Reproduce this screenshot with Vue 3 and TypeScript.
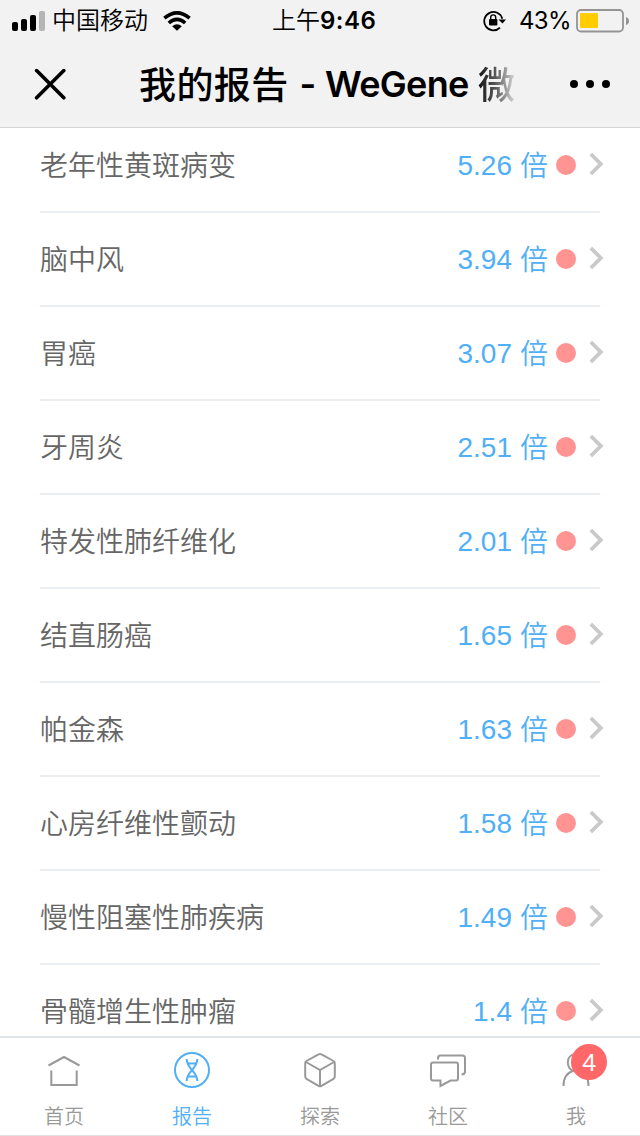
<script setup lang="ts">
interface Report {
  name: string
  risk: string
}

interface Tab {
  id: string
  label: string
  active?: boolean
  badge?: number
}

const reports: Report[] = [
  { name: '老年性黄斑病变', risk: '5.26' },
  { name: '脑中风', risk: '3.94' },
  { name: '胃癌', risk: '3.07' },
  { name: '牙周炎', risk: '2.51' },
  { name: '特发性肺纤维化', risk: '2.01' },
  { name: '结直肠癌', risk: '1.65' },
  { name: '帕金森', risk: '1.63' },
  { name: '心房纤维性颤动', risk: '1.58' },
  { name: '慢性阻塞性肺疾病', risk: '1.49' },
  { name: '骨髓增生性肿瘤', risk: '1.4' },
]

const tabs: Tab[] = [
  { id: 'home', label: '首页' },
  { id: 'report', label: '报告', active: true },
  { id: 'explore', label: '探索' },
  { id: 'community', label: '社区' },
  { id: 'me', label: '我', badge: 4 },
]
</script>

<template>
  <div class="screen">
    <header class="header">
      <div class="status">
        <div class="status-left">
          <svg class="signal" width="34" height="20" viewBox="0 0 34 20">
            <rect x="0" y="11" width="6" height="9" rx="2" />
            <rect x="9" y="8" width="6" height="12" rx="2" />
            <rect x="18" y="4" width="6" height="16" rx="2" />
            <rect x="27" y="0" width="6" height="20" rx="2" fill="#b5b5b5" />
          </svg>
          <span class="carrier">中国移动</span>
          <svg class="wifi" width="28" height="20" viewBox="0 0 28 20">
            <g fill="none" stroke="#000" stroke-width="3.6">
              <path d="M1.4 7.2 Q14 -3.4 26.6 7.2" />
              <path d="M5.8 12 Q14 4.8 22.2 12" />
            </g>
            <path d="M14 19.8 L9.2 15.2 Q14 11.2 18.8 15.2 Z" />
          </svg>
        </div>
        <div class="clock"><span>上午</span><span class="clock-time">9:46</span></div>
        <div class="status-right">
          <svg class="rotation" width="24" height="22" viewBox="0 0 24 22">
            <path d="M17 17.6 A9.2 9.2 0 1 1 19.3 8.7" fill="none" stroke="#000" stroke-width="1.8" />
            <path d="M15.4 9.4 H23 L19.5 13.6 Z" />
            <rect x="6" y="9" width="8.4" height="6.6" rx="1" />
            <path d="M7.7 10 V7.4 A2.5 2.5 0 0 1 12.7 7.4 V10" fill="none" stroke="#000" stroke-width="1.4" />
          </svg>
          <span class="percent">43%</span>
          <svg class="battery" width="54" height="24" viewBox="0 0 54 24">
            <rect x="1" y="1" width="46" height="21.5" rx="4" fill="none" stroke="#949494" stroke-width="1.8" />
            <rect x="4" y="4" width="18" height="15" rx="1" fill="#fc0" />
            <path d="M50 8 Q53 9 53 12 Q53 15 50 16 Z" fill="#949494" />
          </svg>
        </div>
      </div>
      <div class="nav">
        <svg class="close" width="32" height="32" viewBox="0 0 32 32">
          <path d="M2.6 2.6 L29.8 29.8 M29.8 2.6 L2.6 29.8" stroke="#000" stroke-width="3.6" stroke-linecap="round" />
        </svg>
        <h1 class="title"><span class="title-cn">我的报告</span><span class="title-dash">-</span><span class="title-en">WeGene</span><span class="title-fade">微</span></h1>
        <svg class="more" width="42" height="10" viewBox="0 0 42 10">
          <circle cx="5" cy="5" r="4" />
          <circle cx="21" cy="5" r="4" />
          <circle cx="37" cy="5" r="4" />
        </svg>
      </div>
    </header>

    <main class="content">
      <ul class="list">
        <li v-for="item in reports" :key="item.name" class="row">
          <span class="name">{{ item.name }}</span>
          <span class="risk"><span class="value">{{ item.risk }}</span><span class="unit">倍</span></span>
          <span class="dot"></span>
          <svg class="chevron" width="15" height="24" viewBox="0 0 15 24">
            <path d="M1.8 2 L11.8 12 L1.8 22" fill="none" stroke="#c9c9c9" stroke-width="3.8" />
          </svg>
        </li>
      </ul>
    </main>

    <nav class="tabs">
      <div v-for="tab in tabs" :key="tab.id" class="tab" :class="{ active: tab.active }">
        <svg class="tab-icon" width="40" height="40" viewBox="0 0 40 40" fill="none" stroke="currentColor" stroke-width="2">
          <template v-if="tab.id === 'home'">
            <path d="M4.5 15.5 L20 7 L35.5 15.5" />
            <path d="M7.3 20.5 V35 H32.7 V20.5" />
          </template>
          <template v-else-if="tab.id === 'report'">
            <circle cx="20" cy="20" r="17" />
            <path d="M14.7 9 C14.7 19 25.3 21 25.3 31 M25.3 9 C25.3 19 14.7 21 14.7 31" />
            <path d="M15.5 13.5 H24.5 M15.5 26.5 H24.5" />
          </template>
          <template v-else-if="tab.id === 'explore'">
            <path d="M18.5 4.3 L6.5 11 Q5.2 11.8 5.2 13.3 V26.5 Q5.2 28 6.5 28.8 L18.5 35.8 Q20 36.7 21.5 35.8 L33.5 28.8 Q34.8 28 34.8 26.5 V13.3 Q34.8 11.8 33.5 11 L21.5 4.3 Q20 3.5 18.5 4.3 Z" />
            <path d="M6 12 L20 20 L34 12 M20 20 V36" />
          </template>
          <template v-else-if="tab.id === 'community'">
            <path d="M10 9.5 V8 Q10 5.5 12.5 5.5 H34.5 Q37 5.5 37 8 V21.5 Q37 24.5 33.5 24.5" />
            <path d="M5 12.5 H28 Q30 12.5 30 14.5 V28.5 Q30 30.5 28 30.5 H22.5 L12.5 36 V30.5 H5 Q3 30.5 3 28.5 V14.5 Q3 12.5 5 12.5 Z" />
          </template>
          <template v-else>
            <path d="M17 21 C13.5 19 11.8 16 11.8 12.5 C11.8 7.5 15 4 20 4 C25 4 28.2 7.5 28.2 12.5 C28.2 16 26.5 19 23 21" />
            <path d="M7.5 36 C7.5 27 11 22.5 18 20.5 M22 20.5 C29 22.5 32.5 27 32.5 36" />
          </template>
        </svg>
        <span class="tab-label">{{ tab.label }}</span>
        <span v-if="tab.badge" class="badge">{{ tab.badge }}</span>
      </div>
    </nav>
  </div>
</template>

<style>
body {
  margin: 0;
  background: #fff;
}
</style>

<style scoped>
.screen {
  display: flex;
  flex-direction: column;
  width: 640px;
  height: 1136px;
  overflow: hidden;
  background: #fff;
  font-family: "Liberation Sans", "Noto Sans CJK SC", sans-serif;
}

.header {
  flex: none;
  box-sizing: border-box;
  height: 128px;
  background: #f2f2f2;
  border-bottom: 1px solid #d5d5d5;
  color: #000;
}

.status {
  display: grid;
  grid-template-columns: 272px 151px 1fr;
  align-items: center;
  height: 40px;
  font-family: Inter, "Noto Sans CJK SC", sans-serif;
  font-size: 24px;
  line-height: 40px;
  white-space: nowrap;
}

.status-left,
.status-right,
.clock {
  display: flex;
  align-items: center;
}

.status-left {
  padding-left: 12px;
}

.carrier,
.clock {
  padding-top: 1px;
  font-weight: 350;
}

.carrier {
  margin-left: 6px;
}

.wifi {
  margin-left: 15px;
}

.clock-time {
  letter-spacing: 0.5px;
  font-weight: 600;
}

.status-right {
  padding-left: 60px;
}

.percent {
  margin-left: 12px;
  padding-top: 1px;
  letter-spacing: -0.7px;
}

.battery {
  margin-left: 5px;
}

.nav {
  display: flex;
  align-items: center;
  height: 88px;
  padding: 0 29px 0 34px;
}

.title {
  flex: none;
  display: flex;
  width: 376px;
  margin: 4px 54px 0 73px;
  font-family: Inter, "Noto Sans CJK SC", sans-serif;
  font-size: 37px;
  line-height: 48px;
  font-weight: 500;
  white-space: nowrap;
}

.title-cn {
  letter-spacing: 0.4px;
}

.title-dash {
  width: 28px;
  margin: -2px 0 0 11px;
  font-size: 36px;
  font-weight: 600;
}

.title-en {
  width: 143px;
  margin-top: -2px;
  font-size: 36px;
  font-weight: 600;
  letter-spacing: -0.7px;
}

.title-fade {
  margin-left: 10px;
  background: linear-gradient(to right, #111 0%, #555 45%, #d8d8d8 100%);
  background-clip: text;
  -webkit-background-clip: text;
  color: transparent;
}

.content {
  flex: 1;
  min-height: 0;
  overflow: hidden;
}

.list {
  margin: -9px 40px 0;
  padding: 0;
  list-style: none;
}

.row {
  display: flex;
  align-items: center;
  box-sizing: border-box;
  height: 94px;
  border-bottom: 2px solid #eaeef2;
  font-size: 28px;
  line-height: 40px;
}

.name {
  flex: 1;
  padding-top: 4px;
  color: #666;
  font-weight: 350;
}

.risk {
  display: flex;
  padding-top: 2px;
  color: #50aff7;
}

.value {
  margin-right: 8px;
  padding-top: 1px;
}

.unit {
  padding-top: 2px;
  font-weight: 350;
}

.dot {
  width: 20px;
  height: 20px;
  margin: 0 13px 0 8px;
  border-radius: 50%;
  background: #ff9493;
}

.chevron {
  margin: 0 -4px 2px 0;
}

.tabs {
  flex: none;
  display: grid;
  grid-template-columns: repeat(5, 1fr);
  box-sizing: border-box;
  height: 100px;
  border-top: 2px solid #dfe4e8;
  border-bottom: 1px solid #dfe2e5;
  background: #fff;
}

.tab {
  position: relative;
  display: flex;
  flex-direction: column;
  align-items: center;
  padding-top: 12px;
  color: #999;
}

.tab.active {
  color: #50aff7;
}

.tab-icon {
  display: block;
}

.tab-label {
  margin-top: 12px;
  font-size: 20px;
  line-height: 30px;
  font-weight: 350;
}

.badge {
  position: absolute;
  top: 6px;
  left: 59px;
  width: 36px;
  height: 36px;
  border-radius: 50%;
  background: #ff6768;
  color: #fff;
  font-family: "Noto Sans", sans-serif;
  font-size: 24px;
  line-height: 36px;
  text-align: center;
}
</style>
